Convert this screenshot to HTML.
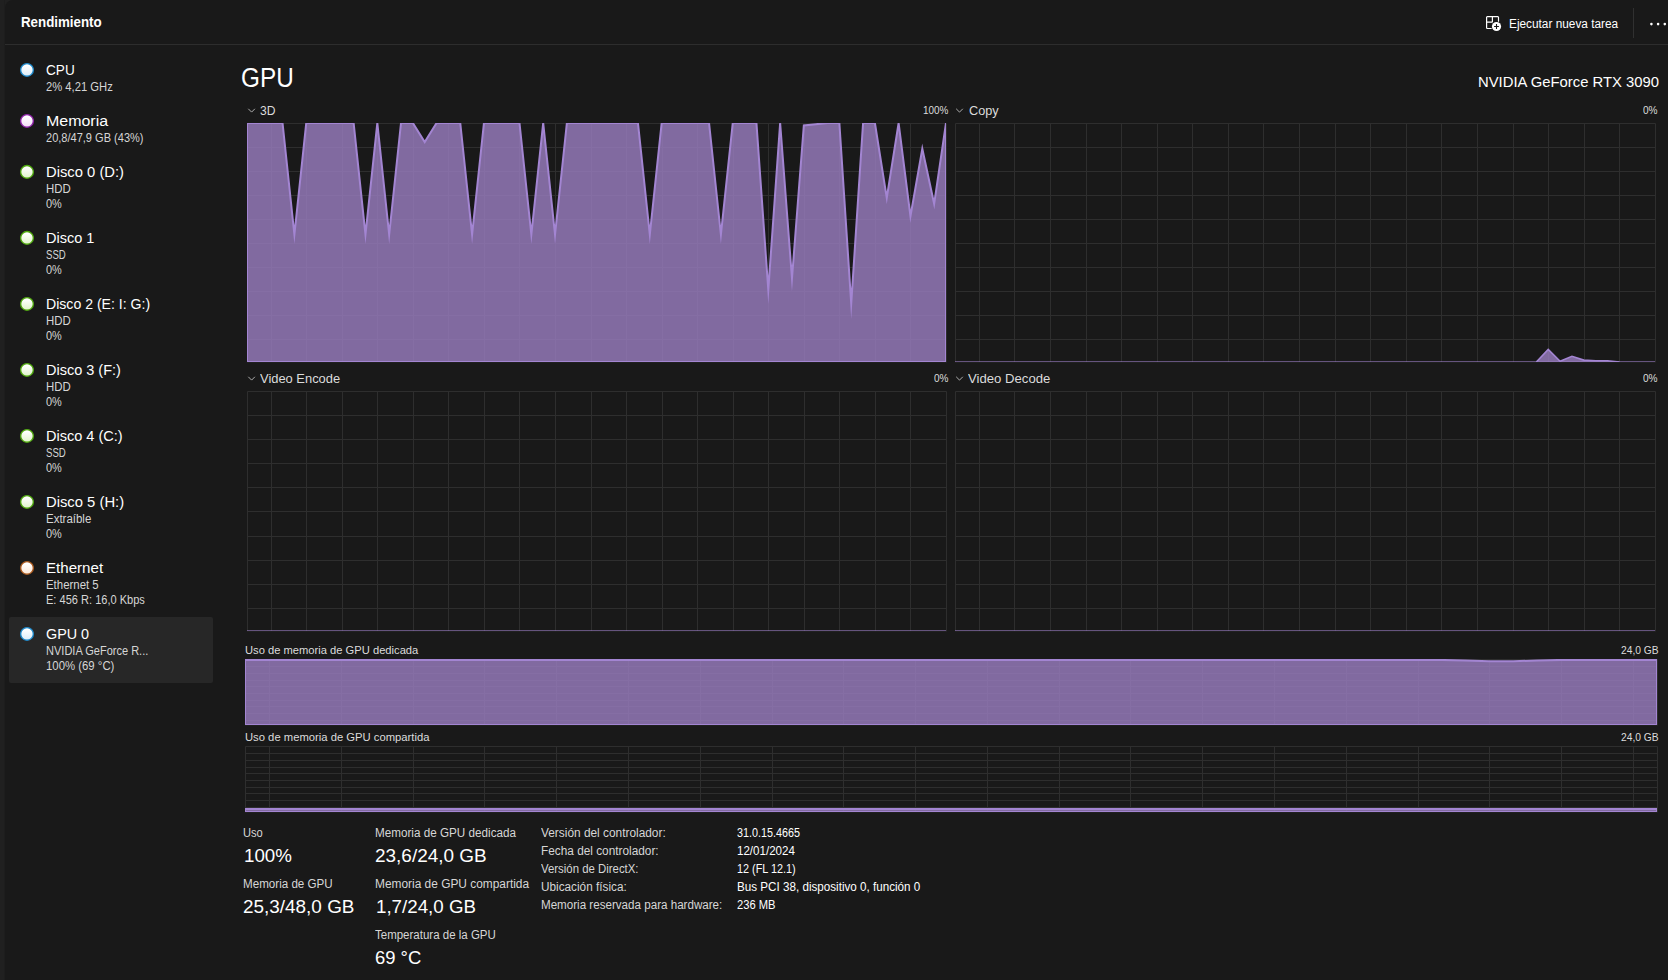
<!DOCTYPE html>
<html lang="es"><head><meta charset="utf-8"><title>Administrador de tareas</title>
<style>
html,body{margin:0;padding:0;}
body{width:1668px;height:980px;background:#191919;overflow:hidden;position:relative;font-family:"Liberation Sans",sans-serif;}
.t{position:absolute;white-space:nowrap;transform-origin:0 0;line-height:1;}
.strip{position:absolute;left:0;top:0;width:4px;height:980px;background:#202020;border-right:1px solid #1d1d1d;}
.hline{position:absolute;left:5px;top:44px;width:1663px;height:1px;background:#2d2d2d;}
.sel{position:absolute;left:9px;top:617px;width:204px;height:66px;background:#272727;border-radius:2px;}
.vsep{position:absolute;left:1633px;top:8px;width:1px;height:30px;background:#303030;}
.dot{position:absolute;width:12px;height:12px;border-radius:50%;border:1.5px solid;box-sizing:content-box;}

</style></head><body>
<div class="strip"></div><div class="hline"></div><div class="sel"></div><div class="vsep"></div>
<div style="position:absolute;left:5px;top:0;width:8px;height:8px;background:#202020"></div><div style="position:absolute;left:5px;top:0;width:16px;height:16px;background:#191919;border-top-left-radius:8px"></div>
<svg style="position:absolute;left:247px;top:123px" width="700" height="240" viewBox="0 0 700 240">
<defs><clipPath id="c1"><rect x="0" y="0" width="699" height="239"/></clipPath></defs>
<path d="M1 24.5H699 M1 48.5H699 M1 72.5H699 M1 96.5H699 M1 120.5H699 M1 144.5H699 M1 168.5H699 M1 192.5H699 M1 216.5H699 M663.5 1V239 M628.5 1V239 M592.5 1V239 M557.5 1V239 M521.5 1V239 M486.5 1V239 M450.5 1V239 M415.5 1V239 M379.5 1V239 M344.5 1V239 M308.5 1V239 M272.5 1V239 M237.5 1V239 M201.5 1V239 M166.5 1V239 M130.5 1V239 M95.5 1V239 M59.5 1V239 M24.5 1V239" stroke="#2e2e2e" stroke-width="1" fill="none"/>
<path d="M0.5 239V0.5H699.5V239" fill="none" stroke="#2e2e2e" stroke-width="1"/>
<path d="M0 239.5H700" fill="none" stroke="#2e2e2e" stroke-width="1" opacity="0.35"/>
<g clip-path="url(#c1)">
<polygon points="0,239 0.00,0.00 11.85,0.00 23.69,0.00 35.54,0.00 47.39,111.61 59.24,0.00 71.08,0.00 82.93,0.00 94.78,0.00 106.63,0.00 118.47,111.61 130.32,0.00 142.17,111.61 154.02,0.00 165.86,0.00 177.71,19.12 189.56,0.00 201.41,0.00 213.25,0.00 225.10,111.61 236.95,0.00 248.80,0.00 260.64,0.00 272.49,0.00 284.34,111.61 296.19,0.00 308.03,111.61 319.88,0.00 331.73,0.00 343.58,0.00 355.42,0.00 367.27,0.00 379.12,0.00 390.97,0.00 402.81,111.61 414.66,0.00 426.51,0.00 438.36,0.00 450.20,0.00 462.05,0.00 473.90,111.61 485.75,0.00 497.59,0.00 509.44,0.00 521.29,166.82 533.14,0.00 544.98,155.35 556.83,2.39 568.68,1.20 580.53,0.00 592.37,0.00 604.22,180.68 616.07,0.00 627.92,0.00 639.76,74.81 651.61,0.00 663.46,93.21 675.31,25.81 687.15,80.78 699.00,0.00 699,239" fill="#997cbe" fill-opacity="0.82"/>
<polygon points="0,239 0.00,0.00 11.85,0.00 23.69,0.00 35.54,0.00 47.39,111.61 59.24,0.00 71.08,0.00 82.93,0.00 94.78,0.00 106.63,0.00 118.47,111.61 130.32,0.00 142.17,111.61 154.02,0.00 165.86,0.00 177.71,19.12 189.56,0.00 201.41,0.00 213.25,0.00 225.10,111.61 236.95,0.00 248.80,0.00 260.64,0.00 272.49,0.00 284.34,111.61 296.19,0.00 308.03,111.61 319.88,0.00 331.73,0.00 343.58,0.00 355.42,0.00 367.27,0.00 379.12,0.00 390.97,0.00 402.81,111.61 414.66,0.00 426.51,0.00 438.36,0.00 450.20,0.00 462.05,0.00 473.90,111.61 485.75,0.00 497.59,0.00 509.44,0.00 521.29,166.82 533.14,0.00 544.98,155.35 556.83,2.39 568.68,1.20 580.53,0.00 592.37,0.00 604.22,180.68 616.07,0.00 627.92,0.00 639.76,74.81 651.61,0.00 663.46,93.21 675.31,25.81 687.15,80.78 699.00,0.00 699,239" fill="none" stroke="#a385d2" stroke-width="2" stroke-linejoin="miter" stroke-miterlimit="40"/>
</g>
</svg>
<svg style="position:absolute;left:955px;top:123px" width="701" height="240" viewBox="0 0 701 240">
<defs><clipPath id="c2"><rect x="0" y="0" width="700" height="239"/></clipPath></defs>
<path d="M1 24.5H700 M1 48.5H700 M1 72.5H700 M1 96.5H700 M1 120.5H700 M1 144.5H700 M1 168.5H700 M1 192.5H700 M1 216.5H700 M664.5 1V239 M629.5 1V239 M593.5 1V239 M558.5 1V239 M522.5 1V239 M486.5 1V239 M451.5 1V239 M415.5 1V239 M380.5 1V239 M344.5 1V239 M308.5 1V239 M273.5 1V239 M237.5 1V239 M202.5 1V239 M166.5 1V239 M131.5 1V239 M95.5 1V239 M59.5 1V239 M24.5 1V239" stroke="#2e2e2e" stroke-width="1" fill="none"/>
<path d="M0.5 239V0.5H700.5V239" fill="none" stroke="#2e2e2e" stroke-width="1"/>
<path d="M0 239.5H701" fill="none" stroke="#2e2e2e" stroke-width="1" opacity="0.35"/>
<g clip-path="url(#c2)">
<path d="M0 238.5H700" stroke="#a385d2" stroke-width="1" opacity="0.55"/>
<polygon points="0,239 0.00,239.00 11.86,239.00 23.73,239.00 35.59,239.00 47.46,239.00 59.32,239.00 71.19,239.00 83.05,239.00 94.92,239.00 106.78,239.00 118.64,239.00 130.51,239.00 142.37,239.00 154.24,239.00 166.10,239.00 177.97,239.00 189.83,239.00 201.69,239.00 213.56,239.00 225.42,239.00 237.29,239.00 249.15,239.00 261.02,239.00 272.88,239.00 284.75,239.00 296.61,239.00 308.47,239.00 320.34,239.00 332.20,239.00 344.07,239.00 355.93,239.00 367.80,239.00 379.66,239.00 391.53,239.00 403.39,239.00 415.25,239.00 427.12,239.00 438.98,239.00 450.85,239.00 462.71,239.00 474.58,239.00 486.44,239.00 498.31,239.00 510.17,239.00 522.03,239.00 533.90,239.00 545.76,239.00 557.63,239.00 569.49,239.00 581.36,239.00 593.22,226.33 605.08,238.28 616.95,233.26 628.81,237.09 640.68,237.81 652.54,237.81 664.41,239.00 676.27,239.00 688.14,239.00 700.00,239.00 700,239" fill="#997cbe" fill-opacity="0.82"/>
<polyline points="581.36,239.00 593.22,226.33 605.08,238.28 616.95,233.26 628.81,237.09 640.68,237.81 652.54,237.81 664.41,239.00" fill="none" stroke="#a385d2" stroke-width="1.6" stroke-linejoin="miter" stroke-miterlimit="40"/>
</g>
</svg>
<svg style="position:absolute;left:247px;top:391px" width="700" height="241" viewBox="0 0 700 241">
<defs><clipPath id="c3"><rect x="0" y="0" width="699" height="240"/></clipPath></defs>
<path d="M1 24.5H699 M1 48.5H699 M1 72.5H699 M1 96.5H699 M1 120.5H699 M1 145.5H699 M1 169.5H699 M1 193.5H699 M1 217.5H699 M663.5 1V240 M628.5 1V240 M592.5 1V240 M557.5 1V240 M521.5 1V240 M486.5 1V240 M450.5 1V240 M415.5 1V240 M379.5 1V240 M344.5 1V240 M308.5 1V240 M272.5 1V240 M237.5 1V240 M201.5 1V240 M166.5 1V240 M130.5 1V240 M95.5 1V240 M59.5 1V240 M24.5 1V240" stroke="#2e2e2e" stroke-width="1" fill="none"/>
<path d="M0.5 240V0.5H699.5V240" fill="none" stroke="#2e2e2e" stroke-width="1"/>
<path d="M0 240.5H700" fill="none" stroke="#2e2e2e" stroke-width="1" opacity="0.35"/>
<g clip-path="url(#c3)">
<path d="M0 239.5H699" stroke="#a385d2" stroke-width="1" opacity="0.55"/>
</g>
</svg>
<svg style="position:absolute;left:955px;top:391px" width="701" height="241" viewBox="0 0 701 241">
<defs><clipPath id="c4"><rect x="0" y="0" width="700" height="240"/></clipPath></defs>
<path d="M1 24.5H700 M1 48.5H700 M1 72.5H700 M1 96.5H700 M1 120.5H700 M1 145.5H700 M1 169.5H700 M1 193.5H700 M1 217.5H700 M664.5 1V240 M629.5 1V240 M593.5 1V240 M558.5 1V240 M522.5 1V240 M486.5 1V240 M451.5 1V240 M415.5 1V240 M380.5 1V240 M344.5 1V240 M308.5 1V240 M273.5 1V240 M237.5 1V240 M202.5 1V240 M166.5 1V240 M131.5 1V240 M95.5 1V240 M59.5 1V240 M24.5 1V240" stroke="#2e2e2e" stroke-width="1" fill="none"/>
<path d="M0.5 240V0.5H700.5V240" fill="none" stroke="#2e2e2e" stroke-width="1"/>
<path d="M0 240.5H701" fill="none" stroke="#2e2e2e" stroke-width="1" opacity="0.35"/>
<g clip-path="url(#c4)">
<path d="M0 239.5H700" stroke="#a385d2" stroke-width="1" opacity="0.55"/>
</g>
</svg>
<svg style="position:absolute;left:245px;top:659px" width="1413" height="67" viewBox="0 0 1413 67">
<defs><clipPath id="c5"><rect x="0" y="0" width="1412" height="66"/></clipPath></defs>
<path d="M1 7.5H1412 M1 14.5H1412 M1 21.5H1412 M1 27.5H1412 M1 34.5H1412 M1 41.5H1412 M1 47.5H1412 M1 54.5H1412 M1 61.5H1412 M1388.5 1V66 M1316.5 1V66 M1244.5 1V66 M1173.5 1V66 M1101.5 1V66 M1029.5 1V66 M957.5 1V66 M885.5 1V66 M814.5 1V66 M742.5 1V66 M670.5 1V66 M598.5 1V66 M527.5 1V66 M455.5 1V66 M383.5 1V66 M311.5 1V66 M239.5 1V66 M168.5 1V66 M96.5 1V66 M24.5 1V66" stroke="#2e2e2e" stroke-width="1" fill="none"/>
<path d="M0.5 66V0.5H1412.5V66" fill="none" stroke="#2e2e2e" stroke-width="1"/>
<path d="M0 66.5H1413" fill="none" stroke="#2e2e2e" stroke-width="1" opacity="0.35"/>
<g clip-path="url(#c5)">
<polygon points="0,66 0.00,0.92 23.93,0.92 47.86,0.92 71.80,0.92 95.73,0.92 119.66,0.92 143.59,0.92 167.53,0.92 191.46,0.92 215.39,0.92 239.32,0.92 263.25,0.92 287.19,0.92 311.12,0.92 335.05,0.92 358.98,0.92 382.92,0.92 406.85,0.92 430.78,0.92 454.71,0.92 478.64,0.92 502.58,0.92 526.51,0.92 550.44,0.92 574.37,0.92 598.31,0.92 622.24,0.92 646.17,0.92 670.10,0.92 694.03,0.92 717.97,0.92 741.90,0.92 765.83,0.92 789.76,0.92 813.69,0.92 837.63,0.92 861.56,0.92 885.49,0.92 909.42,0.92 933.36,0.92 957.29,0.92 981.22,0.92 1005.15,0.92 1029.08,0.92 1053.02,0.92 1076.95,0.92 1100.88,0.92 1124.81,0.92 1148.75,0.92 1172.68,0.92 1196.61,0.92 1220.54,1.52 1244.47,2.31 1268.41,2.31 1292.34,1.45 1316.27,0.92 1340.20,0.92 1364.14,0.92 1388.07,0.92 1412.00,0.92 1412,66" fill="#997cbe" fill-opacity="0.82"/>
<polygon points="0,66 0.00,0.92 23.93,0.92 47.86,0.92 71.80,0.92 95.73,0.92 119.66,0.92 143.59,0.92 167.53,0.92 191.46,0.92 215.39,0.92 239.32,0.92 263.25,0.92 287.19,0.92 311.12,0.92 335.05,0.92 358.98,0.92 382.92,0.92 406.85,0.92 430.78,0.92 454.71,0.92 478.64,0.92 502.58,0.92 526.51,0.92 550.44,0.92 574.37,0.92 598.31,0.92 622.24,0.92 646.17,0.92 670.10,0.92 694.03,0.92 717.97,0.92 741.90,0.92 765.83,0.92 789.76,0.92 813.69,0.92 837.63,0.92 861.56,0.92 885.49,0.92 909.42,0.92 933.36,0.92 957.29,0.92 981.22,0.92 1005.15,0.92 1029.08,0.92 1053.02,0.92 1076.95,0.92 1100.88,0.92 1124.81,0.92 1148.75,0.92 1172.68,0.92 1196.61,0.92 1220.54,1.52 1244.47,2.31 1268.41,2.31 1292.34,1.45 1316.27,0.92 1340.20,0.92 1364.14,0.92 1388.07,0.92 1412.00,0.92 1412,66" fill="none" stroke="#a385d2" stroke-width="2" stroke-linejoin="miter" stroke-miterlimit="40"/>
</g>
</svg>
<svg style="position:absolute;left:245px;top:746px" width="1413" height="67" viewBox="0 0 1413 67">
<defs><clipPath id="c6"><rect x="0" y="0" width="1412" height="66"/></clipPath></defs>
<path d="M1 7.5H1412 M1 14.5H1412 M1 21.5H1412 M1 27.5H1412 M1 34.5H1412 M1 41.5H1412 M1 47.5H1412 M1 54.5H1412 M1 61.5H1412 M1388.5 1V66 M1316.5 1V66 M1244.5 1V66 M1173.5 1V66 M1101.5 1V66 M1029.5 1V66 M957.5 1V66 M885.5 1V66 M814.5 1V66 M742.5 1V66 M670.5 1V66 M598.5 1V66 M527.5 1V66 M455.5 1V66 M383.5 1V66 M311.5 1V66 M239.5 1V66 M168.5 1V66 M96.5 1V66 M24.5 1V66" stroke="#2e2e2e" stroke-width="1" fill="none"/>
<path d="M0.5 66V0.5H1412.5V66" fill="none" stroke="#2e2e2e" stroke-width="1"/>
<path d="M0 66.5H1413" fill="none" stroke="#2e2e2e" stroke-width="1" opacity="0.35"/>
<g clip-path="url(#c6)">
<polygon points="0,66 0.00,62.96 23.93,62.96 47.86,62.96 71.80,62.96 95.73,62.96 119.66,62.96 143.59,62.96 167.53,62.96 191.46,62.96 215.39,62.96 239.32,62.96 263.25,62.96 287.19,62.96 311.12,62.96 335.05,62.96 358.98,62.96 382.92,62.96 406.85,62.96 430.78,62.96 454.71,62.96 478.64,62.96 502.58,62.96 526.51,62.96 550.44,62.96 574.37,62.96 598.31,62.96 622.24,62.96 646.17,62.96 670.10,62.96 694.03,62.96 717.97,62.96 741.90,62.96 765.83,62.96 789.76,62.96 813.69,62.96 837.63,62.96 861.56,62.96 885.49,62.96 909.42,62.96 933.36,62.96 957.29,62.96 981.22,62.96 1005.15,62.96 1029.08,62.96 1053.02,62.96 1076.95,62.96 1100.88,62.96 1124.81,62.96 1148.75,62.96 1172.68,62.96 1196.61,62.96 1220.54,62.96 1244.47,62.96 1268.41,62.96 1292.34,62.96 1316.27,62.96 1340.20,62.96 1364.14,62.96 1388.07,62.96 1412.00,62.96 1412,66" fill="#997cbe" fill-opacity="0.82"/>
<polygon points="0,66 0.00,62.96 23.93,62.96 47.86,62.96 71.80,62.96 95.73,62.96 119.66,62.96 143.59,62.96 167.53,62.96 191.46,62.96 215.39,62.96 239.32,62.96 263.25,62.96 287.19,62.96 311.12,62.96 335.05,62.96 358.98,62.96 382.92,62.96 406.85,62.96 430.78,62.96 454.71,62.96 478.64,62.96 502.58,62.96 526.51,62.96 550.44,62.96 574.37,62.96 598.31,62.96 622.24,62.96 646.17,62.96 670.10,62.96 694.03,62.96 717.97,62.96 741.90,62.96 765.83,62.96 789.76,62.96 813.69,62.96 837.63,62.96 861.56,62.96 885.49,62.96 909.42,62.96 933.36,62.96 957.29,62.96 981.22,62.96 1005.15,62.96 1029.08,62.96 1053.02,62.96 1076.95,62.96 1100.88,62.96 1124.81,62.96 1148.75,62.96 1172.68,62.96 1196.61,62.96 1220.54,62.96 1244.47,62.96 1268.41,62.96 1292.34,62.96 1316.27,62.96 1340.20,62.96 1364.14,62.96 1388.07,62.96 1412.00,62.96 1412,66" fill="none" stroke="#a385d2" stroke-width="2" stroke-linejoin="miter" stroke-miterlimit="40"/>
</g>
</svg>
<svg style="position:absolute;left:0;top:0" width="1668" height="980" viewBox="0 0 1668 980">
<defs>
<linearGradient id="g0" x1="0" y1="0" x2="0" y2="1"><stop offset="0.15" stop-color="#ffffff"/><stop offset="1" stop-color="#dcecf8"/></linearGradient>
<linearGradient id="g1" x1="0" y1="0" x2="0" y2="1"><stop offset="0.15" stop-color="#ffffff"/><stop offset="1" stop-color="#f3dcf8"/></linearGradient>
<linearGradient id="g2" x1="0" y1="0" x2="0" y2="1"><stop offset="0.15" stop-color="#ffffff"/><stop offset="1" stop-color="#dff3c8"/></linearGradient>
<linearGradient id="g3" x1="0" y1="0" x2="0" y2="1"><stop offset="0.15" stop-color="#ffffff"/><stop offset="1" stop-color="#fbe6d6"/></linearGradient>
</defs>
<g transform="translate(1485 15)" fill="none" stroke="#ffffff" stroke-width="1.2" stroke-linecap="round" stroke-linejoin="round">
<path d="M6.2 13.5H2.3a.7.7 0 0 1-.7-.7V2.3a.7.7 0 0 1 .7-.7H12.8a.7.7 0 0 1 .7.7V6.2"/>
<path d="M7.4 1.6V6.7a.5.5 0 0 1-.5.5H1.6"/>
<circle cx="11.5" cy="11.5" r="4.6" fill="#ffffff" stroke="none"/>
<path d="M11.5 9.1V13.9M9.1 11.5H13.9" stroke="#191919" stroke-width="1.1" stroke-linecap="butt"/>
</g>
<circle cx="1651.4" cy="24.1" r="1.3" fill="#ffffff"/>
<circle cx="1658.1" cy="24.1" r="1.3" fill="#ffffff"/>
<circle cx="1664.8" cy="24.1" r="1.3" fill="#ffffff"/>
<path d="M248.30 108.80L251.60 112.10L254.90 108.80" fill="none" stroke="#bdbdbd" stroke-width="0.9"/>
<path d="M956.20 108.80L959.50 112.10L962.80 108.80" fill="none" stroke="#bdbdbd" stroke-width="0.9"/>
<path d="M248.30 376.80L251.60 380.10L254.90 376.80" fill="none" stroke="#bdbdbd" stroke-width="0.9"/>
<path d="M956.20 376.80L959.50 380.10L962.80 376.80" fill="none" stroke="#bdbdbd" stroke-width="0.9"/>
<circle cx="27.00" cy="69.90" r="6.35" fill="url(#g0)" stroke="#1b87c9" stroke-width="1.35"/>
<circle cx="27.00" cy="120.90" r="6.35" fill="url(#g1)" stroke="#8b1fa5" stroke-width="1.35"/>
<circle cx="27.00" cy="171.90" r="6.35" fill="url(#g2)" stroke="#4da60c" stroke-width="1.35"/>
<circle cx="27.00" cy="237.90" r="6.35" fill="url(#g2)" stroke="#4da60c" stroke-width="1.35"/>
<circle cx="27.00" cy="303.90" r="6.35" fill="url(#g2)" stroke="#4da60c" stroke-width="1.35"/>
<circle cx="27.00" cy="369.90" r="6.35" fill="url(#g2)" stroke="#4da60c" stroke-width="1.35"/>
<circle cx="27.00" cy="435.90" r="6.35" fill="url(#g2)" stroke="#4da60c" stroke-width="1.35"/>
<circle cx="27.00" cy="501.90" r="6.35" fill="url(#g2)" stroke="#4da60c" stroke-width="1.35"/>
<circle cx="27.00" cy="567.90" r="6.35" fill="url(#g3)" stroke="#a7561a" stroke-width="1.35"/>
<circle cx="27.00" cy="633.90" r="6.35" fill="url(#g0)" stroke="#1b87c9" stroke-width="1.35"/>
</svg>
<div class="t" style="left:21.30px;top:15.15px;font-size:14px;color:#ffffff;transform:scaleX(0.9519);font-weight:bold;">Rendimiento</div>
<div class="t" style="left:1509.10px;top:17.94px;font-size:12px;color:#ffffff;transform:scaleX(0.9852);">Ejecutar nueva tarea</div>
<div class="t" style="left:45.80px;top:61.68px;font-size:15.5px;color:#ffffff;transform:scaleX(0.8770);">CPU</div>
<div class="t" style="left:46.20px;top:80.94px;font-size:12px;color:#d6d6d6;transform:scaleX(0.9360);">2% 4,21 GHz</div>
<div class="t" style="left:45.80px;top:112.68px;font-size:15.5px;color:#ffffff;transform:scaleX(1.0300);">Memoria</div>
<div class="t" style="left:46.20px;top:131.94px;font-size:12px;color:#d6d6d6;transform:scaleX(0.9193);">20,8/47,9 GB (43%)</div>
<div class="t" style="left:45.80px;top:163.68px;font-size:15.5px;color:#ffffff;transform:scaleX(0.9534);">Disco 0 (D:)</div>
<div class="t" style="left:46.20px;top:182.94px;font-size:12px;color:#d6d6d6;transform:scaleX(0.9500);">HDD</div>
<div class="t" style="left:46.20px;top:197.84px;font-size:12px;color:#d6d6d6;transform:scaleX(0.9110);">0%</div>
<div class="t" style="left:45.80px;top:229.68px;font-size:15.5px;color:#ffffff;transform:scaleX(0.9364);">Disco 1</div>
<div class="t" style="left:46.20px;top:248.94px;font-size:12px;color:#d6d6d6;transform:scaleX(0.8024);">SSD</div>
<div class="t" style="left:46.20px;top:263.84px;font-size:12px;color:#d6d6d6;transform:scaleX(0.9110);">0%</div>
<div class="t" style="left:45.80px;top:295.68px;font-size:15.5px;color:#ffffff;transform:scaleX(0.9088);">Disco 2 (E: I: G:)</div>
<div class="t" style="left:46.20px;top:314.94px;font-size:12px;color:#d6d6d6;transform:scaleX(0.9500);">HDD</div>
<div class="t" style="left:46.20px;top:329.84px;font-size:12px;color:#d6d6d6;transform:scaleX(0.9110);">0%</div>
<div class="t" style="left:45.80px;top:361.68px;font-size:15.5px;color:#ffffff;transform:scaleX(0.9352);">Disco 3 (F:)</div>
<div class="t" style="left:46.20px;top:380.94px;font-size:12px;color:#d6d6d6;transform:scaleX(0.9500);">HDD</div>
<div class="t" style="left:46.20px;top:395.84px;font-size:12px;color:#d6d6d6;transform:scaleX(0.9110);">0%</div>
<div class="t" style="left:45.80px;top:427.68px;font-size:15.5px;color:#ffffff;transform:scaleX(0.9375);">Disco 4 (C:)</div>
<div class="t" style="left:46.20px;top:446.94px;font-size:12px;color:#d6d6d6;transform:scaleX(0.8024);">SSD</div>
<div class="t" style="left:46.20px;top:461.84px;font-size:12px;color:#d6d6d6;transform:scaleX(0.9110);">0%</div>
<div class="t" style="left:45.80px;top:493.68px;font-size:15.5px;color:#ffffff;transform:scaleX(0.9546);">Disco 5 (H:)</div>
<div class="t" style="left:46.20px;top:512.94px;font-size:12px;color:#d6d6d6;transform:scaleX(0.9566);">Extraíble</div>
<div class="t" style="left:46.20px;top:527.84px;font-size:12px;color:#d6d6d6;transform:scaleX(0.9110);">0%</div>
<div class="t" style="left:45.80px;top:559.68px;font-size:15.5px;color:#ffffff;transform:scaleX(0.9745);">Ethernet</div>
<div class="t" style="left:46.20px;top:578.94px;font-size:12px;color:#d6d6d6;transform:scaleX(0.9517);">Ethernet 5</div>
<div class="t" style="left:46.20px;top:593.84px;font-size:12px;color:#d6d6d6;transform:scaleX(0.9208);">E: 456 R: 16,0 Kbps</div>
<div class="t" style="left:45.80px;top:625.68px;font-size:15.5px;color:#ffffff;transform:scaleX(0.9266);">GPU 0</div>
<div class="t" style="left:46.20px;top:644.94px;font-size:12px;color:#d6d6d6;transform:scaleX(0.9186);">NVIDIA GeForce R...</div>
<div class="t" style="left:46.20px;top:659.84px;font-size:12px;color:#d6d6d6;transform:scaleX(0.9478);">100% (69 °C)</div>
<div class="t" style="left:241.30px;top:64.71px;font-size:26.8px;color:#ffffff;transform:scaleX(0.9074);">GPU</div>
<div class="t" style="left:1478.40px;top:74.32px;font-size:15.1px;color:#ffffff;transform:scaleX(0.9823);">NVIDIA GeForce RTX 3090</div>
<div class="t" style="left:260.30px;top:105.03px;font-size:12.6px;color:#dcdcdc;transform:scaleX(0.9623);">3D</div>
<div class="t" style="left:923.30px;top:105.09px;font-size:11px;color:#dcdcdc;transform:scaleX(0.9028);">100%</div>
<div class="t" style="left:968.70px;top:105.03px;font-size:12.6px;color:#dcdcdc;transform:scaleX(1.0097);">Copy</div>
<div class="t" style="left:1643.00px;top:105.09px;font-size:11px;color:#dcdcdc;transform:scaleX(0.9183);">0%</div>
<div class="t" style="left:260.20px;top:373.03px;font-size:12.6px;color:#dcdcdc;transform:scaleX(1.0251);">Video Encode</div>
<div class="t" style="left:934.20px;top:373.09px;font-size:11px;color:#dcdcdc;transform:scaleX(0.9120);">0%</div>
<div class="t" style="left:967.90px;top:373.03px;font-size:12.6px;color:#dcdcdc;transform:scaleX(1.0439);">Video Decode</div>
<div class="t" style="left:1643.00px;top:373.09px;font-size:11px;color:#dcdcdc;transform:scaleX(0.9183);">0%</div>
<div class="t" style="left:245.40px;top:644.79px;font-size:11px;color:#dcdcdc;transform:scaleX(1.0159);">Uso de memoria de GPU dedicada</div>
<div class="t" style="left:1620.50px;top:644.79px;font-size:11px;color:#dcdcdc;transform:scaleX(0.9341);">24,0 GB</div>
<div class="t" style="left:245.40px;top:731.89px;font-size:11px;color:#dcdcdc;transform:scaleX(1.0224);">Uso de memoria de GPU compartida</div>
<div class="t" style="left:1620.50px;top:731.89px;font-size:11px;color:#dcdcdc;transform:scaleX(0.9341);">24,0 GB</div>
<div class="t" style="left:243.00px;top:826.54px;font-size:12px;color:#d6d6d6;transform:scaleX(0.9278);">Uso</div>
<div class="t" style="left:243.80px;top:847.26px;font-size:18.6px;color:#ffffff;transform:scaleX(1.0069);">100%</div>
<div class="t" style="left:243.00px;top:878.04px;font-size:12px;color:#d6d6d6;transform:scaleX(0.9677);">Memoria de GPU</div>
<div class="t" style="left:243.20px;top:898.26px;font-size:18.6px;color:#ffffff;transform:scaleX(1.0172);">25,3/48,0 GB</div>
<div class="t" style="left:374.70px;top:826.54px;font-size:12px;color:#d6d6d6;transform:scaleX(0.9741);">Memoria de GPU dedicada</div>
<div class="t" style="left:374.90px;top:847.26px;font-size:18.6px;color:#ffffff;transform:scaleX(1.0200);">23,6/24,0 GB</div>
<div class="t" style="left:374.70px;top:878.04px;font-size:12px;color:#d6d6d6;transform:scaleX(0.9917);">Memoria de GPU compartida</div>
<div class="t" style="left:375.60px;top:898.26px;font-size:18.6px;color:#ffffff;transform:scaleX(1.0074);">1,7/24,0 GB</div>
<div class="t" style="left:374.70px;top:928.64px;font-size:12px;color:#d6d6d6;transform:scaleX(0.9583);">Temperatura de la GPU</div>
<div class="t" style="left:374.90px;top:949.26px;font-size:18.6px;color:#ffffff;transform:scaleX(0.9908);">69 °C</div>
<div class="t" style="left:541.30px;top:827.04px;font-size:12px;color:#d6d6d6;transform:scaleX(0.9890);">Versión del controlador:</div>
<div class="t" style="left:737.00px;top:827.04px;font-size:12px;color:#ffffff;transform:scaleX(0.8991);">31.0.15.4665</div>
<div class="t" style="left:541.30px;top:845.09px;font-size:12px;color:#d6d6d6;transform:scaleX(0.9849);">Fecha del controlador:</div>
<div class="t" style="left:737.00px;top:845.09px;font-size:12px;color:#ffffff;transform:scaleX(0.9640);">12/01/2024</div>
<div class="t" style="left:541.30px;top:863.14px;font-size:12px;color:#d6d6d6;transform:scaleX(0.9492);">Versión de DirectX:</div>
<div class="t" style="left:737.00px;top:863.14px;font-size:12px;color:#ffffff;transform:scaleX(0.9041);">12 (FL 12.1)</div>
<div class="t" style="left:541.30px;top:881.19px;font-size:12px;color:#d6d6d6;transform:scaleX(0.9809);">Ubicación física:</div>
<div class="t" style="left:737.00px;top:881.19px;font-size:12px;color:#ffffff;transform:scaleX(0.9710);">Bus PCI 38, dispositivo 0, función 0</div>
<div class="t" style="left:541.30px;top:899.24px;font-size:12px;color:#d6d6d6;transform:scaleX(0.9673);">Memoria reservada para hardware:</div>
<div class="t" style="left:737.00px;top:899.24px;font-size:12px;color:#ffffff;transform:scaleX(0.9309);">236 MB</div>
</body></html>
